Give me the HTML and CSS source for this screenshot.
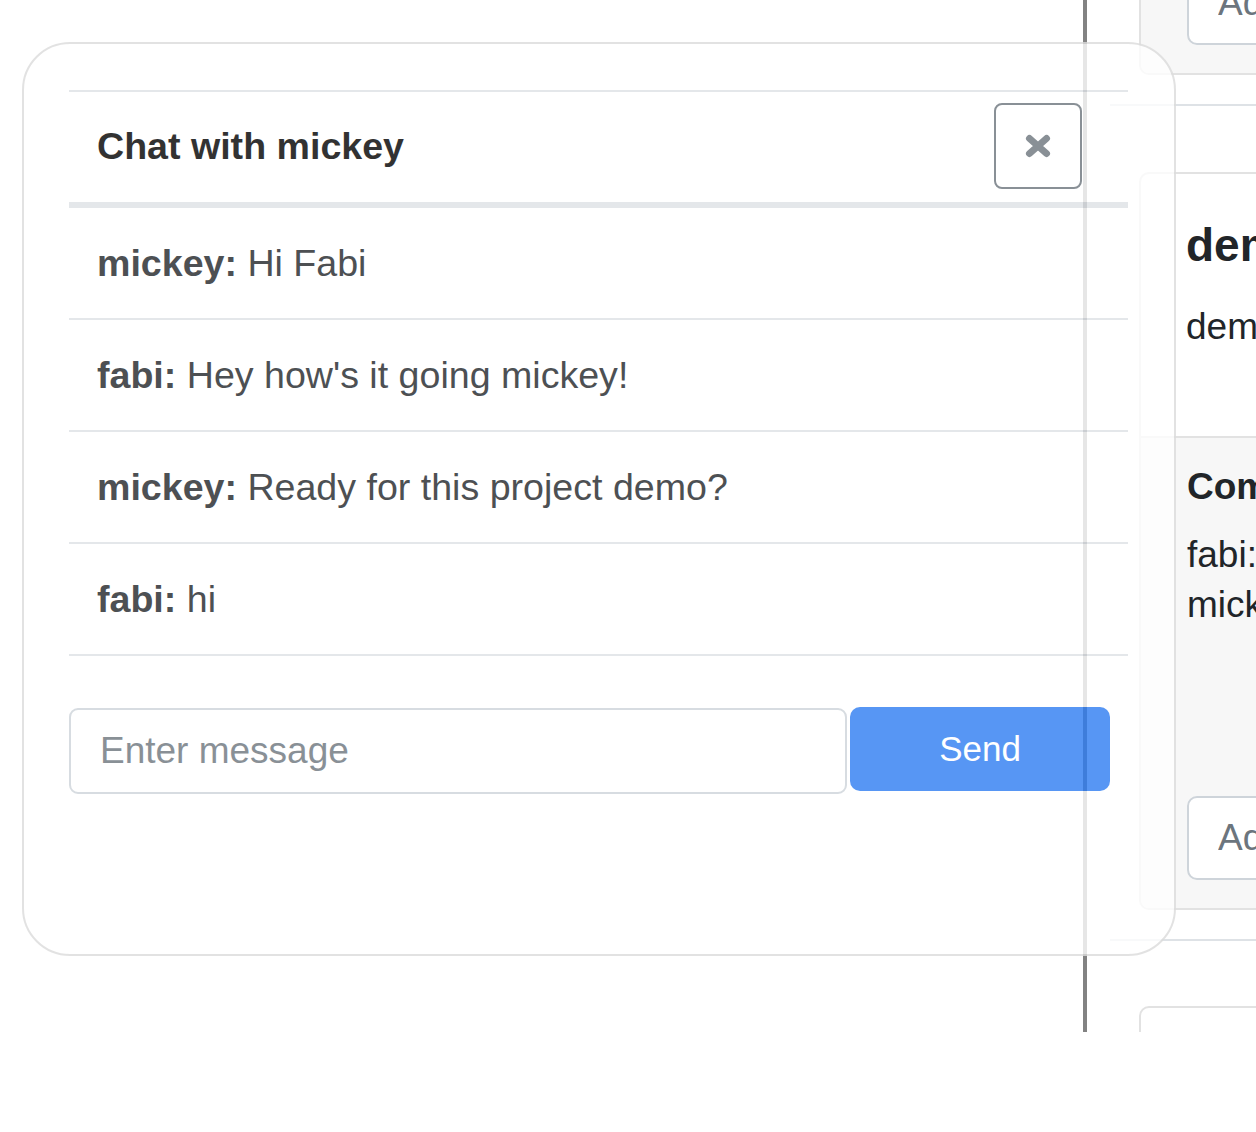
FILE: index.html
```html
<!DOCTYPE html>
<html lang="en">
<head>
<meta charset="utf-8">
<title>Chat with mickey</title>
<link rel="stylesheet" href="styles.css">
</head>
<body>
<div class="page">
  <div class="left"></div>
  <div class="divider"></div>
  <div class="right">
    <div class="feed">
      <div class="item">
        <div class="card">
          <div class="card-footer">
            <input class="comment-input" placeholder="Add comment">
          </div>
        </div>
      </div>
      <div class="item">
        <div class="card">
          <div class="card-body">
            <h4 class="card-title">demo</h4>
            <p class="card-text">demo project</p>
          </div>
          <div class="card-footer bordered">
            <h5 class="comments-title">Comments</h5>
            <p class="comment">fabi: nice</p>
            <p class="comment">mickey: thanks</p>
            <input class="comment-input spaced" placeholder="Add comment">
          </div>
        </div>
      </div>
      <div class="item">
        <div class="card tall"></div>
      </div>
    </div>
  </div>
</div>

<div class="modal">
  <div class="chat">
    <div class="chat-head">
      <h5 class="chat-title">Chat with mickey</h5>
      <button class="close" type="button" aria-label="Close">
        <svg width="26" height="24" viewBox="0 0 26 24"><path d="M4.5 4.5 L21.5 19.5 M21.5 4.5 L4.5 19.5" stroke="#6c757d" stroke-width="7" stroke-linecap="round" fill="none"/></svg>
      </button>
    </div>
    <div class="msg"><b>mickey:</b>&nbsp;Hi Fabi</div>
    <div class="msg"><b>fabi:</b>&nbsp;Hey how's it going mickey!</div>
    <div class="msg"><b>mickey:</b>&nbsp;Ready for this project demo?</div>
    <div class="msg"><b>fabi:</b>&nbsp;hi</div>
  </div>
  <form class="send-row">
    <input class="msg-input" placeholder="Enter message">
    <button class="send" type="button">Send</button>
  </form>
</div>
</body>
</html>
```

FILE: styles.css
```css
* { box-sizing: border-box; }

html, body {
  margin: 0;
  padding: 0;
}

body {
  width: 1256px;
  height: 1132px;
  overflow: hidden;
  position: relative;
  background: #fff;
  font-family: "Liberation Sans", Arial, sans-serif;
  color: #212529;
}

/* ---------- page behind the modal ---------- */
.page {
  display: flex;
  height: 1032px;
  overflow: hidden;
}

.left {
  width: 1083px;
  flex: none;
}

.divider {
  width: 4px;
  flex: none;
  background: #828282;
}

.right {
  flex: none;
  width: 169px;
  overflow: hidden;
  padding-left: 23px;
}

.feed {
  width: 800px;
  margin-top: -135px;
}

.item {
  padding: 66px 0 29px 29px;
  border-bottom: 2px solid #dee2e6;
}

.item:last-child {
  padding-top: 65px;
}

.card {
  width: 700px;
  border: 2px solid #e2e2e2;
  border-radius: 10px;
  background: #fff;
  overflow: hidden;
}

.card.tall {
  height: 200px;
}

.card-body {
  padding: 44px 40px 81px 45px;
}

.card-title {
  margin: 0 0 25px;
  font-size: 46px;
  line-height: 1.2;
  font-weight: 700;
  color: #212529;
}

.card-text {
  margin: 0;
  font-size: 37px;
  line-height: 57px;
}

.card-footer {
  background: #f7f7f7;
  padding: 28px 40px 28px 46px;
}

.card-footer.bordered {
  border-top: 2px solid #e2e2e2;
  padding-top: 27px;
}

.comments-title {
  margin: 0 0 20px;
  font-size: 37px;
  line-height: 1.2;
  font-weight: 700;
  color: #212529;
}

.comment {
  margin: 0;
  font-size: 37px;
  line-height: 50px;
}

.comment-input {
  display: block;
  width: 520px;
  height: 84px;
  border: 2px solid #ced4da;
  border-radius: 10px;
  background: #fff;
  padding: 0 0 0 29px;
  font-family: inherit;
  font-size: 37px;
  color: #495057;
  outline: none;
}

.comment-input.spaced {
  margin-top: 166px;
}

.comment-input::placeholder,
.msg-input::placeholder {
  color: #6c757d;
  opacity: 1;
}

/* ---------- chat modal ---------- */
.modal {
  position: absolute;
  left: 22px;
  top: 42px;
  width: 1154px;
  height: 914px;
  background: #fff;
  border: 2px solid #dcdcdc;
  border-radius: 48px;
  opacity: 0.8;
  padding: 46px 46px 0 45px;
}

.chat-head {
  display: flex;
  align-items: center;
  justify-content: space-between;
  height: 118px;
  border-top: 2px solid #dee2e6;
  border-bottom: 6px solid #dee2e6;
  padding: 0 46px 0 28px;
}

.chat-title {
  margin: 0;
  font-size: 37.6px;
  line-height: 1.2;
  font-weight: 700;
  color: #000;
}

.close {
  width: 88px;
  height: 86px;
  margin-top: -2px;
  border: 2px solid #6c757d;
  border-radius: 8px;
  background: transparent;
  display: flex;
  align-items: center;
  justify-content: center;
  padding: 0;
}

.msg {
  display: flex;
  align-items: center;
  height: 112px;
  border-bottom: 2px solid #dee2e6;
  padding-left: 28px;
  font-size: 37.6px;
  color: #212529;
}

.msg b {
  font-weight: 700;
}

.send-row {
  display: flex;
  align-items: flex-start;
  gap: 3px;
  width: 1041px;
  margin: 52px 0 0;
}

.msg-input {
  width: 778px;
  height: 86px;
  border: 2px solid #ced4da;
  border-radius: 9px;
  padding: 0 0 0 29px;
  font-family: inherit;
  font-size: 37px;
  color: #495057;
  background: #fff;
  outline: none;
}

.send {
  flex: 1;
  height: 84px;
  margin-top: -1px;
  border: none;
  border-radius: 10px;
  background: #2e7df2;
  color: #fff;
  font-family: inherit;
  font-size: 35px;
  padding: 0;
}
```
